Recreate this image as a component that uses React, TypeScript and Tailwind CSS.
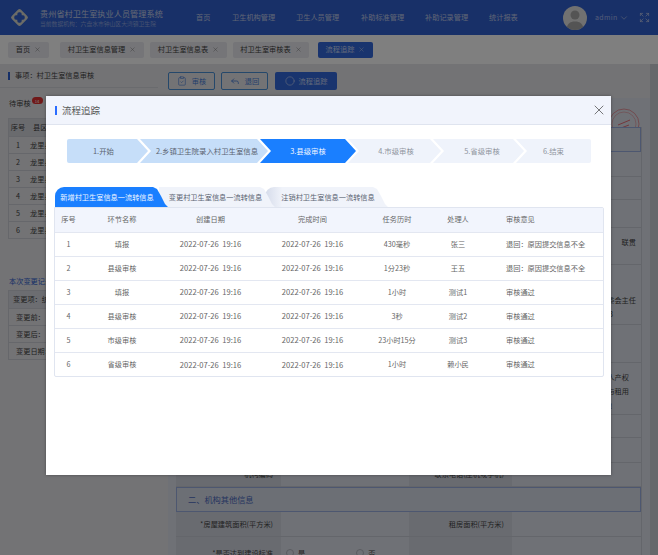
import { ClipboardCheck, Reply, Circle, X, ChevronDown, Expand } from "lucide-react";

const font = { fontFamily: '"Noto Sans CJK SC", "Noto Sans", sans-serif' };

const navs = [
  { label: "首页", cls: "w-[36px]" },
  { label: "卫生机构管理", cls: "w-[64px]" },
  { label: "卫生人员管理", cls: "w-[65px]" },
  { label: "补助标准管理", cls: "w-[64px]" },
  { label: "补助记录管理", cls: "w-[64px]" },
  { label: "统计报表", cls: "w-[40px]" },
];

const pageTabs = [
  { label: "首页", cls: "w-[41px] ml-[8px]" },
  { label: "村卫生室信息管理", cls: "w-[84px] ml-[11px]" },
  { label: "村卫生室信息表", cls: "w-[77px] ml-[6px]" },
  { label: "村卫生室审核表", cls: "w-[76px] ml-[6px]" },
];

const steps = [
  { label: "1.开始", cls: "w-[81px] pr-[8px] bg-[#c6def9] text-[#5b6472] [clip-path:polygon(0_0,calc(100%-11px)_0,100%_50%,calc(100%-11px)_100%,0_100%)] rounded-l-[2px]" },
  { label: "2.乡镇卫生院录入村卫生室信息", cls: "w-[128px] -ml-[8px] pl-[6px] bg-[#c6def9] text-[#5b6472] [clip-path:polygon(0_0,calc(100%-11px)_0,100%_50%,calc(100%-11px)_100%,0_100%,11px_50%)]" },
  { label: "3.县级审核", cls: "w-[96px] -ml-[8px] bg-[#1a7fff] text-[#eef5ff] z-10 [clip-path:polygon(0_0,calc(100%-11px)_0,100%_50%,calc(100%-11px)_100%,0_100%,11px_50%)]" },
  { label: "4.市级审核", cls: "w-[93px] -ml-[8px] pl-[3px] bg-[#eff3fb] text-[#8f95a0] [clip-path:polygon(0_0,calc(100%-11px)_0,100%_50%,calc(100%-11px)_100%,0_100%,11px_50%)]" },
  { label: "5.省级审核", cls: "w-[91px] -ml-[8px] pl-[7px] bg-[#eff3fb] text-[#8f95a0] [clip-path:polygon(0_0,calc(100%-11px)_0,100%_50%,calc(100%-11px)_100%,0_100%,11px_50%)]" },
  { label: "6.结束", cls: "w-[75px] -ml-[8px] bg-[#eff3fb] text-[#8f95a0] rounded-r-[2px] [clip-path:polygon(0_0,100%_0,100%_100%,0_100%,11px_50%)]" },
];

const flowTabs = [
  { label: "新增村卫生室信息一流转信息", cls: "w-[113px] z-20 rounded-tl-[9px] bg-[#1a7fff] text-[#eef5ff] pr-[9px]" },
  { label: "变更村卫生室信息一流转信息", cls: "w-[116px] -ml-[9px] z-10 bg-[#f0f3fa] text-[#5b6472] pr-[3px]" },
  { label: "注销村卫生室信息一流转信息", cls: "w-[123px] -ml-[10px] rounded-tl-[9px] bg-gradient-to-r from-[#d5dbea] to-[#f0f3fa] to-[14%] text-[#5b6472] pl-[3px]" },
];

const flowRows = [
  ["1", "填报", "430毫秒", "张三", "退回：原因提交信息不全"],
  ["2", "县级审核", "1分23秒", "王五", "退回：原因提交信息不全"],
  ["3", "填报", "1小时", "测试1", "审核通过"],
  ["4", "县级审核", "3秒", "测试2", "审核通过"],
  ["5", "市级审核", "23小时15分", "测试3", "审核通过"],
  ["6", "省级审核", "1小时", "赖小民", "审核通过"],
];

const sideRows = ["1", "2", "3", "4", "5", "6"];
const changeRows = ["变更项：统一", "变更前：", "变更后：", "变更日期："];

function FlowModal() {
  return (
    <div className="absolute left-[46px] top-[96px] flex h-[379px] w-[565px] flex-col bg-white shadow-[0_0_3px_rgba(0,0,0,0.35)]">
      <div className="flex h-[29px] shrink-0 items-center border-b border-[#dfe4ef] bg-[#f1f4fc] pl-[9px] pr-[4px]">
        <span className="h-[9px] w-[2px] bg-[#2a6cff]" />
        <span className="ml-[5px] text-[9.5px] text-[#555]">流程追踪</span>
        <X className="ml-auto h-[16px] w-[16px] text-[#555]" strokeWidth={1.2} />
      </div>

      <div className="ml-[21px] mt-[14px] flex h-[24px] w-[524px] text-[7.4px]">
        {steps.map((s) => (
          <div key={s.label} className={`relative flex shrink-0 items-center justify-center ${s.cls}`}>
            {s.label}
          </div>
        ))}
      </div>

      <div className="ml-[9px] mt-[24px] flex h-[20px] text-[7.2px]">
        {flowTabs.map((t) => (
          <div
            key={t.label}
            className={`relative flex shrink-0 items-center justify-center [clip-path:polygon(0_0,calc(100%-15px)_0,calc(100%-11px)_2px,calc(100%-7px)_9px,calc(100%-3px)_17px,100%_100%,0_100%)] ${t.cls}`}
          >
            {t.label}
          </div>
        ))}
      </div>

      <div className="ml-[8px] w-[550px] overflow-hidden rounded-b-[2px] rounded-tr-[2px] border border-[#e0e5f0]">
        <table className="w-[548px] table-fixed border-collapse text-center text-[7.2px] text-[#666]">
          <colgroup>
            <col className="w-[27px]" />
            <col className="w-[80px]" />
            <col className="w-[97px]" />
            <col className="w-[107px]" />
            <col className="w-[62px]" />
            <col className="w-[60px]" />
            <col />
          </colgroup>
          <thead>
            <tr className="h-[24px] bg-[#f2f5fd]">
              <th className="font-normal">序号</th>
              <th className="font-normal">环节名称</th>
              <th className="font-normal">创建日期</th>
              <th className="font-normal">完成时间</th>
              <th className="font-normal">任务历时</th>
              <th className="font-normal">处理人</th>
              <th className="pl-[18px] text-left font-normal">审核意见</th>
            </tr>
          </thead>
          <tbody>
            {flowRows.map((r) => (
              <tr key={r[0]} className="h-[24px] border-t border-[#e3e7f1]">
                <td>{r[0]}</td>
                <td>{r[1]}</td>
                <td className="whitespace-pre text-[7.6px]">2022-07-26  19:16</td>
                <td className="whitespace-pre text-[7.6px]">2022-07-26  19:16</td>
                <td>{r[2]}</td>
                <td>{r[3]}</td>
                <td className="pl-[18px] text-left">{r[4]}</td>
              </tr>
            ))}
          </tbody>
        </table>
      </div>
    </div>
  );
}

function SidePanel() {
  return (
    <aside className="h-full w-[158px] shrink-0 bg-[#e6e6ea] text-[7.2px] text-[#444]">
      <div className="flex h-[24px] items-center border-b border-[#d5d6dc] pl-[8px]">
        <span className="h-[8px] w-[2px] bg-[#2a5fd0]" />
        <span className="ml-[5px]">事项：村卫生室信息审核</span>
      </div>
      <div className="mt-[8px] flex h-[14px] items-center pl-[9px]">
        待审核
        <span className="-mt-[5px] ml-[1px] flex h-[7px] w-[11px] items-center justify-center rounded-full bg-[#e03030] text-[4px] text-white">14</span>
      </div>
      <div className="ml-[8px] mt-[8px] w-[142px] border border-[#ccced6]">
        <div className="flex h-[17px] items-center bg-[#d4d6dd]">
          <span className="w-[18px] text-center">序号</span>
          <span className="ml-[6px]">县区</span>
        </div>
        {sideRows.map((n) => (
          <div key={n} className="flex h-[17px] items-center border-t border-[#ccced6]">
            <span className="w-[18px] text-center">{n}</span>
            <span className="ml-[3px]">龙里县</span>
          </div>
        ))}
      </div>
      <div className="ml-[9px] mt-[37px] leading-[10px] text-[#2f5fd0]">本次变更记录</div>
      <div className="ml-[8px] mt-[4px] w-[142px] border border-[#ccced6]">
        {changeRows.map((t, i) => (
          <div key={t} className={`flex h-[17px] items-center border-[#ccced6] ${i === 0 ? "bg-[#d9dbe2] pl-[4px]" : "border-t pl-[7px]"}`}>
            {t}
          </div>
        ))}
      </div>
    </aside>
  );
}

function InfoRow({ a, b, cls, children }: { a?: string; b?: string; cls: string; children?: React.ReactNode }) {
  return (
    <div className={`grid grid-cols-[105px_128px_103px_1fr] border-b border-[#c8ccd6] ${cls}`}>
      <div className="flex items-center justify-end bg-[#d2d6e0] pr-[8px]">{a}</div>
      <div />
      <div className="flex items-center justify-end bg-[#d2d6e0] pr-[8px]">{b}</div>
      <div className="flex flex-col justify-center">{children}</div>
    </div>
  );
}

function SectionRow({ label }: { label: string }) {
  return (
    <div className="flex h-[25px] items-center border border-[#9aaee0] bg-[#d9deea] pl-[11px] text-[8.2px] text-[#4a6ac0]">{label}</div>
  );
}

function MainPanel() {
  return (
    <main className="h-full w-[482px] shrink-0 pt-[8px] text-[7.2px] text-[#444]">
      <div className="flex gap-[6px]">
        <button className="flex h-[18px] w-[47px] items-center justify-center gap-[5px] rounded-[2px] border border-[#4a90d6] text-[#4a7fd8]">
          <ClipboardCheck className="h-[10px] w-[10px]" strokeWidth={1.5} />
          审核
        </button>
        <button className="flex h-[18px] w-[47px] items-center justify-center gap-[5px] rounded-[2px] border border-[#4a90d6] text-[#4a7fd8]">
          <Reply className="h-[10px] w-[10px]" strokeWidth={2} />
          退回
        </button>
        <button className="ml-[1px] flex h-[18px] w-[62px] items-center justify-center gap-[4px] rounded-[2px] bg-[#3268dc] text-[#c8d6f5]">
          <Circle className="h-[10px] w-[10px]" strokeWidth={1.5} />
          流程追踪
        </button>
      </div>
      <div className="relative mt-[8px] h-[470px] bg-[#dfe3ec] px-[8px] pt-[29px]">
        <svg viewBox="0 0 32 32" className="absolute right-[10px] top-[10px] h-[32px] w-[32px] text-[#e8606a]" fill="none" stroke="currentColor">
          <circle cx="16" cy="16" r="15" strokeWidth="0.6" />
          <circle cx="16" cy="16" r="12" strokeWidth="0.4" />
          <path d="M10 17l12-5M13 20l8-3" strokeWidth="0.9" />
        </svg>
        <div className="relative border-r border-[#c8ccd6]">
          <SectionRow label="一、机构基本信息" />
          <InfoRow cls="h-[25px]" />
          <InfoRow cls="h-[23px]" />
          <InfoRow cls="h-[28px]" />
          <InfoRow cls="h-[37px]">
            <div className="pb-[8px] pr-[5px] text-right">联贯</div>
          </InfoRow>
          <InfoRow cls="h-[60px]">
            <div className="pt-[24px] pr-[5px] text-right leading-[14px]">村委会主任</div>
            <div className="pr-[28px] text-right leading-[14px]">3</div>
          </InfoRow>
          <InfoRow cls="h-[38px]" />
          <InfoRow cls="h-[52px]">
            <div className="pt-[4px] pr-[12px] text-right leading-[14px]">人产权</div>
            <div className="pr-[12px] text-right leading-[14px]">与租用</div>
            <div className="pr-[29px] text-right leading-[14px]">地</div>
          </InfoRow>
          <InfoRow cls="h-[23px]" />
          <InfoRow cls="h-[25px]" />
          <InfoRow cls="h-[24px]" a="机构编码" b="联系电话(座机或手机)" />
          <SectionRow label="二、机构其他信息" />
          <InfoRow cls="h-[25px]" a="*房屋建筑面积(平方米)" b="租房面积(平方米)" />
          <div className="grid h-[32px] grid-cols-[105px_128px_103px_1fr]">
            <div className="flex items-center justify-end bg-[#d2d6e0] pr-[8px]">*是否达到建设标准</div>
            <div className="flex items-center gap-[4px] pl-[5px]">
              <span className="h-[8px] w-[8px] rounded-full border border-[#b5b8c2]" />
              <span>是</span>
              <span className="ml-[47px] h-[8px] w-[8px] rounded-full border border-[#b5b8c2]" />
              <span>否</span>
            </div>
            <div className="bg-[#d2d6e0]" />
            <div />
          </div>
        </div>
      </div>
    </main>
  );
}

export default function App() {
  return (
    <div className="relative h-[555px] w-[658px] overflow-hidden bg-[#e6e6ea]" style={font}>
      <header className="flex h-[35px] items-center bg-[#3060d0] text-white">
        <svg viewBox="0 0 24 24" className="ml-[9px] h-[21px] w-[21px]">
          <rect x="4.5" y="4.5" width="15" height="15" rx="2.5" transform="rotate(45 12 12)" fill="#d9d9cf" />
          <rect x="9.5" y="6" width="5" height="12" rx="2" fill="#3060d0" />
          <rect x="6" y="9.5" width="12" height="5" rx="2" fill="#3060d0" />
        </svg>
        <div className="ml-[10px] w-[130px]">
          <div className="text-[8.2px] leading-[11px] text-[#c8d0e8]">贵州省村卫生室执业人员管理系统</div>
          <div className="mt-[1px] text-[5.8px] leading-[8px] text-[#8fa6e0]">当前数据机构：六盘水市钟山区大湾镇卫生院</div>
        </div>
        <nav className="ml-[26px] flex text-[7.2px] text-[#c0cbea]">
          {navs.map((n) => (
            <span key={n.label} className={n.cls}>{n.label}</span>
          ))}
        </nav>
        <div className="ml-[34px] flex h-[24px] w-[24px] shrink-0 items-end justify-center overflow-hidden rounded-full bg-[#e2e2e2]">
          <svg viewBox="0 0 24 24" className="h-[24px] w-[24px] text-[#a8a8a8]" fill="currentColor">
            <circle cx="12" cy="9" r="4.5" />
            <path d="M3.5 24c0-6 3.5-8.5 8.5-8.5s8.5 2.5 8.5 8.5z" />
          </svg>
        </div>
        <span className="ml-[8px] text-[7px] tracking-[0.3px] text-[#a8baf0]">admin</span>
        <ChevronDown className="ml-[2px] h-[10px] w-[10px] text-[#c0cbea]" strokeWidth={1.5} />
        <Expand className="ml-[10px] h-[11px] w-[11px] text-[#c0cbea]" strokeWidth={1.5} />
      </header>

      <div className="flex h-[29px] items-center bg-white text-[7.2px] text-[#444]">
        {pageTabs.map((t) => (
          <div key={t.label} className={`flex h-[16px] items-center justify-center gap-[4px] rounded-[2px] bg-[#eaeaf0] ${t.cls}`}>
            {t.label}
            <X className="h-[7px] w-[7px] text-[#777]" strokeWidth={1.5} />
          </div>
        ))}
        <div className="ml-[9px] flex h-[16px] w-[55px] items-center justify-center gap-[4px] rounded-[2px] bg-[#3268dc] text-[#c8d6f5]">
          流程追踪
          <X className="h-[7px] w-[7px]" strokeWidth={1.5} />
        </div>
      </div>

      <div className="flex h-[491px] gap-[10px]">
        <SidePanel />
        <MainPanel />
        <div className="flex-1 -ml-[10px] bg-[#cdd0d6]" />
      </div>

      <div className="absolute inset-0 bg-black/50" />
      <FlowModal />
    </div>
  );
}
